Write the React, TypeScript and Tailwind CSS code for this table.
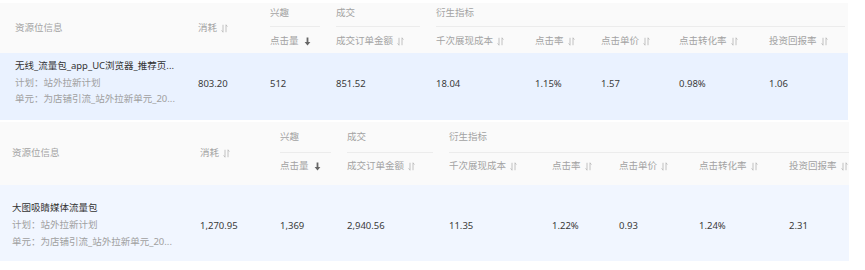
import React from "react";

type Cfg = {
  widths: number[];
  firstPl: number;
  topGap: string;
  headH: string;
  groupRow: string;
  subRow: string;
  rowCls: string;
  lineCls: string;
  valPt: string;
  lastLineMr: string;
  title: string;
  vals: string[];
};

const SortIcon = () => (
  <svg width="7" height="9" viewBox="0 0 7 9" className="ml-[4px] inline-block" fill="none" stroke="#bbb" strokeWidth="0.9">
    <path d="M2 0.8V8.2M2 8.2L0.6 6.4" />
    <path d="M5 0.8V8.2M5 0.8L6.4 2.6" />
  </svg>
);

const DownIcon = () => (
  <svg width="7" height="9" viewBox="0 0 7 9" className="ml-[5px] inline-block" fill="#666">
    <rect x="2.6" y="0.5" width="1.8" height="5" />
    <path d="M0.6 5H6.4L3.5 8.6Z" />
  </svg>
);

function Table({ c }: { c: Cfg }) {
  const w = c.widths;
  const subs: { t: string; icon: "sort" | "down" }[] = [
    { t: "点击量", icon: "down" },
    { t: "成交订单金额", icon: "sort" },
    { t: "千次展现成本", icon: "sort" },
    { t: "点击率", icon: "sort" },
    { t: "点击单价", icon: "sort" },
    { t: "点击转化率", icon: "sort" },
    { t: "投资回报率", icon: "sort" },
  ];
  const derivedW = w[4] + w[5] + w[6] + w[7] + w[8];
  return (
    <div className={`${c.topGap}`} style={{ width: w.reduce((a, b) => a + b, 0) }}>
      <div className={`flex bg-[#fafafa] text-[#a3a3a3] ${c.headH}`}>
        <div className="flex items-center shrink-0" style={{ width: w[0], paddingLeft: c.firstPl }}>
          资源位信息
        </div>
        <div className="flex items-center shrink-0" style={{ width: w[1] }}>
          消耗
          <SortIcon />
        </div>
        <div className="flex flex-col">
          <div className="flex">
            <div className="shrink-0" style={{ width: w[2] }}>
              <div className={`mr-[16px] border-b ${c.lineCls} ${c.groupRow}`}>兴趣</div>
            </div>
            <div className="shrink-0" style={{ width: w[3] }}>
              <div className={`mr-[16px] border-b ${c.lineCls} ${c.groupRow}`}>成交</div>
            </div>
            <div className="shrink-0" style={{ width: derivedW }}>
              <div className={`${c.lastLineMr} border-b ${c.lineCls} ${c.groupRow}`}>衍生指标</div>
            </div>
          </div>
          <div className="flex">
            {subs.map((s, i) => (
              <div key={i} className={`shrink-0 flex items-start ${c.subRow}`} style={{ width: w[i + 2] }}>
                <span className="flex items-center h-[16px]">
                  {s.t}
                  {s.icon === "down" ? <DownIcon /> : <SortIcon />}
                </span>
              </div>
            ))}
          </div>
        </div>
      </div>
      <div className={`flex ${c.rowCls}`}>
        <div className="shrink-0" style={{ width: w[0], paddingLeft: c.firstPl }}>
          <div className="text-[#333]">{c.title}</div>
          <div className="text-[#a0a0a0]">计划：站外拉新计划</div>
          <div className="text-[#a0a0a0]">单元：为店铺引流_站外拉新单元_20...</div>
        </div>
        {c.vals.map((v, i) => (
          <div key={i} className={`shrink-0 text-[#3a3a3a] ${c.valPt}`} style={{ width: w[i + 1] }}>
            {v}
          </div>
        ))}
      </div>
    </div>
  );
}

export default function App() {
  const t1: Cfg = {
    widths: [198, 72, 66, 100, 99, 66, 78, 90, 79],
    firstPl: 15,
    topGap: "pt-[3px]",
    headH: "h-[50px]",
    groupRow: "h-[24px] pt-[2px] leading-[16px] border-[#ececec]",
    subRow: "h-[26px] pt-[6px] leading-[16px]",
    rowCls: "bg-[#eaf2ff] h-[67px] pt-[5px] leading-[16.5px]",
    lineCls: "border-[#ececec]",
    valPt: "pt-[17.5px]",
    lastLineMr: "mr-[3px]",
    title: "无线_流量包_app_UC浏览器_推荐页...",
    vals: ["803.20", "512", "851.52", "18.04", "1.15%", "1.57", "0.98%", "1.06"],
  };
  const t2: Cfg = {
    widths: [200, 80, 67, 102, 103, 67, 80, 90, 60],
    firstPl: 12,
    topGap: "pt-[2px]",
    headH: "h-[63px]",
    groupRow: "h-[31px] pt-[7px] leading-[16px]",
    subRow: "h-[31px] pt-[5px] leading-[16px]",
    rowCls: "bg-[#f1f6ff] h-[76px] pt-[13.5px] leading-[17px]",
    lineCls: "border-[#ececec]",
    valPt: "pt-[18px]",
    lastLineMr: "mr-0",
    title: "大图吸睛媒体流量包",
    vals: ["1,270.95", "1,369", "2,940.56", "11.35", "1.22%", "0.93", "1.24%", "2.31"],
  };
  return (
    <div
      className="w-[865px] h-[270px] bg-white overflow-hidden text-[9.5px]"
      style={{ fontFamily: '"Noto Sans", "Noto Sans CJK SC", sans-serif' }}
    >
      <Table c={t1} />
      <Table c={t2} />
    </div>
  );
}
